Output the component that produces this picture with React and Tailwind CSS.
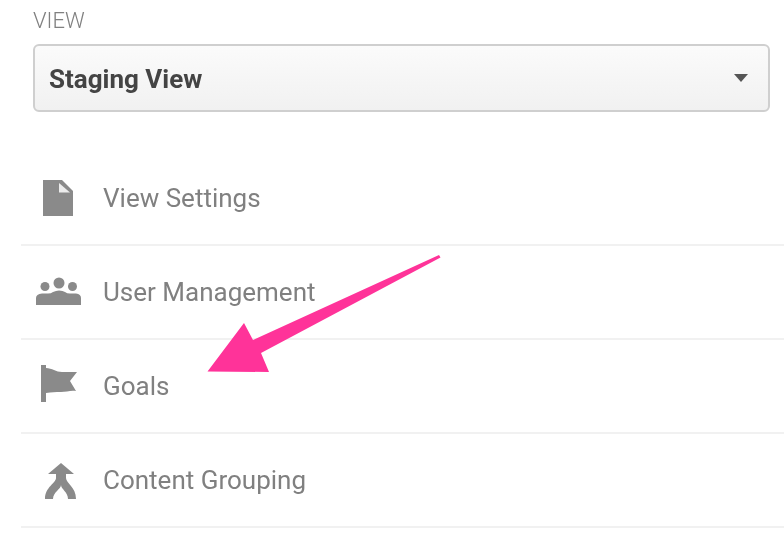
const font = { fontFamily: "Roboto, sans-serif" };

function FileIcon() {
  return (
    <svg width="30" height="36" viewBox="0 0 30 36" className="block">
      <path d="M0 0H19L30 11V36H0Z" fill="#8a8a8a" />
      <path d="M16 3L27 12.500H16Z" fill="#ececec" />
    </svg>
  );
}
function UsersIcon() {
  return (
    <svg width="46" height="30" viewBox="0 0 46 30" className="block">
      <g fill="#8a8a8a">
        <circle cx="9" cy="9.500" r="4.500" />
        <circle cx="23" cy="6" r="5.500" />
        <circle cx="36.500" cy="9.500" r="4.500" />
        <path d="M0 28V21Q0 17 6 16.500H12Q15 16.500 17 15Q20 13.500 23 13.500Q27 13.500 29 15Q31 16.500 34 16.500H40Q45 17 45 21V28Z" />
      </g>
    </svg>
  );
}
function FlagIcon() {
  return (
    <svg width="38" height="37" viewBox="0 0 38 37" className="block">
      <path d="M1 0H6V37H1Z" fill="#8a8a8a" />
      <path d="M6 3C12 3 16 7 22 7C27 7 32 7 37 7L30 16L36 26C31 25 26 27 21 27C15 27 12 27 6 28Z" fill="#8a8a8a" />
    </svg>
  );
}
function MergeIcon() {
  return (
    <svg width="32" height="36" viewBox="0 0 32 36" className="block">
      <path d="M16 0L29 11H21V15C21 20 31 24 31 36H23C23 29 16 26 16 22C16 26 8 29 8 36H0C0 24 11 20 11 15V11H3Z" fill="#8a8a8a" />
    </svg>
  );
}

const rows = [
  { label: "View Settings", icon: <FileIcon />, box: "pl-[22px] pt-[1px]" },
  { label: "User Management", icon: <UsersIcon />, box: "pl-[15px]" },
  { label: "Goals", icon: <FlagIcon />, box: "pl-[19px] pb-[5px]" },
  { label: "Content Grouping", icon: <MergeIcon />, box: "pl-[24px] pt-[1px]" },
];

export default function App() {
  return (
    <div style={font} className="relative h-[539px] w-[784px] overflow-hidden bg-white blur-[0.4px]">
      <div className="pl-[33px] pr-[14px] pt-[8px]">
        <div className="text-[22px] font-light leading-[26px] text-[#808080]">VIEW</div>
        <div className="mt-[10px] flex h-[68px] items-center justify-between rounded-[6px] border-2 border-[#cfcfcf] bg-gradient-to-b from-[#fbfbfb] to-[#f1f1f1] pl-[14px] pr-[20px]">
          <span className="pt-[2px] text-[26px] font-bold text-[#444444]">Staging View</span>
          <span className="h-0 w-0 border-x-[7px] border-t-[8px] border-x-transparent border-t-[#555555]" />
        </div>
      </div>
      <div className="ml-[21px] mt-[39px]">
        {rows.map((r, i) => (
          <div
            key={r.label}
            className={`flex items-center border-b-2 border-[#f1f1f1] ${i === 0 ? "h-[95px]" : "h-[94px]"}`}
          >
            <div className={`flex w-[82px] shrink-0 ${r.box}`}>{r.icon}</div>
            <span className="pt-[1px] text-[26px] text-[#808080]">{r.label}</span>
          </div>
        ))}
      </div>
      <svg className="absolute left-0 top-0" width="784" height="539" viewBox="0 0 784 539">
        <path d="M207.500 371.500L244 323L253 340L439 255L440.500 257.500L261 353L269 372Z" fill="#ff3399" />
      </svg>
    </div>
  );
}
